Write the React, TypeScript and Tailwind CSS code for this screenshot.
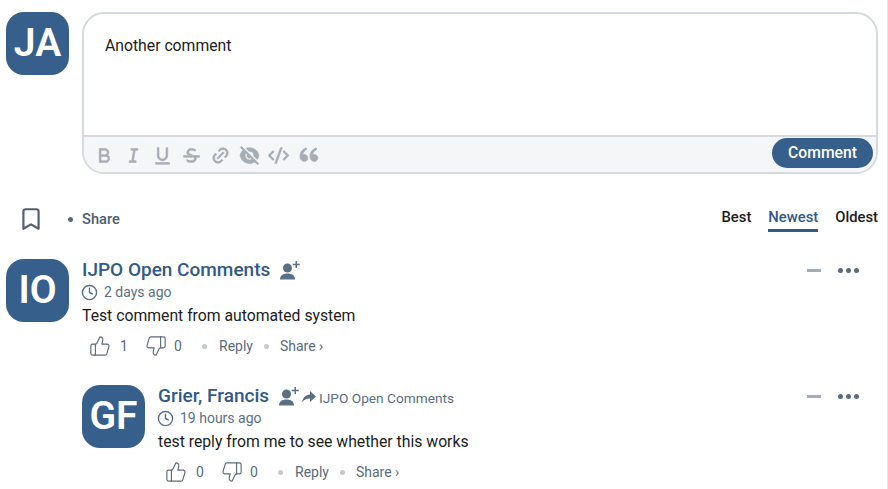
import { RiBold, RiItalic, RiUnderline, RiStrikethrough, RiLinkM, RiEyeOffFill, RiCodeSSlashLine, RiDoubleQuotesL } from "react-icons/ri";
import { Bookmark, Clock, ThumbsDown, ThumbsUp } from "lucide-react";

function Avatar({ initials }: { initials: string }) {
  return (
    <div className="flex h-[63px] w-[63px] shrink-0 items-center justify-center rounded-[18px] bg-[#365f8c] text-[39px] font-semibold text-white">
      {initials}
    </div>
  );
}

function FollowIcon() {
  return (
    <svg width="20" height="19" viewBox="0 0 20 19" fill="#5b7083">
      <circle cx="7.5" cy="7" r="4.5" />
      <path d="M0 18.500c0-4 3-6 7.500-6s7.500 2 7.500 6z" />
      <path d="M15.500 0h1.500v2.800h2.800v1.500H17v2.800h-1.500V4.300h-2.800V2.800h2.800z" />
    </svg>
  );
}

function Dot({ className }: { className: string }) {
  return <span className={`h-[5px] w-[5px] rounded-full ${className}`} />;
}

function Comment({
  initials,
  name,
  time,
  body,
  likes,
  replyTo,
}: {
  initials: string;
  name: string;
  time: string;
  body: string;
  likes: number;
  replyTo?: string;
}) {
  return (
    <div className="flex gap-[13px]">
      <Avatar initials={initials} />
      <div className="min-w-0 flex-1">
        <div className="flex h-[23px] items-center">
          <span className="text-[19px] font-medium text-[#315a88]">{name}</span>
          <span className="ml-[10px] -mt-[1px]">
            <FollowIcon />
          </span>
          {replyTo && (
            <span className="ml-[3px] mt-[3px] flex items-center gap-[3px] text-[13.7px] text-[#5b7083]">
              <svg width="14" height="12" viewBox="0 0 14 12" fill="#5b7083" className="-mt-[3px]">
                <path d="M8 0l6 5.500L8 11V7.500C4.500 7.500 2 8.500 0 11.500 .7 7 3.500 4 8 3.500z" />
              </svg>
              {replyTo}
            </span>
          )}
          <div className="ml-auto mr-[28px] flex items-center gap-[17px]">
            <span className="h-[3px] w-[14px] bg-[#a3adb8]" />
            <div className="flex gap-[3px]">
              <Dot className="bg-[#5b6b7d]" />
              <Dot className="bg-[#5b6b7d]" />
              <Dot className="bg-[#5b6b7d]" />
            </div>
          </div>
        </div>
        <div className="flex items-center gap-[6px] text-[14px] leading-[20px] text-[#5b7083]">
          <Clock size={17} strokeWidth={2} className="-ml-[1px]" />
          <span>{time}</span>
        </div>
        <p className="mt-[3px] text-[15.75px] leading-[22px] text-[#1c1c1c]">{body}</p>
        <div className="mt-[7px] ml-[7px] flex h-[24px] items-center text-[14px] text-[#5b6b7d]">
          <ThumbsUp size={22} strokeWidth={1.25} className="text-[#5f6b78]" />
          <span className="ml-[9px] w-[8px]">{likes}</span>
          <ThumbsDown size={22} strokeWidth={1.25} className="ml-[17px] text-[#5f6b78]" />
          <span className="ml-[7px] w-[8px]">0</span>
          <Dot className="ml-[20px] bg-[#c4cad1]" />
          <span className="ml-[12px]">Reply</span>
          <Dot className="ml-[11px] bg-[#c4cad1]" />
          <span className="ml-[11px]">Share ›</span>
        </div>
      </div>
    </div>
  );
}

export default function App() {
  return (
    <div className="h-[489px] w-[888px] overflow-hidden border-r border-[#e5e7eb] bg-white pl-[6px] pt-[12px] font-['Roboto',sans-serif]">
      <div className="flex gap-[13px] pr-[9px]">
        <Avatar initials="JA" />
        <div className="h-[162px] flex-1 overflow-hidden rounded-[22px] border-2 border-[#d5dae1]">
          <div className="h-[121px] px-[21px] pt-[21px] text-[15.75px] leading-[22px] text-[#1c1c1c]">Another comment</div>
          <div className="flex h-[37px] items-center border-t-2 border-[#d5dae1] bg-[#f5f6f8] pb-[3px] pl-[10px] pr-[3px] text-[#a6adb5]">
            <div className="mt-[4px] flex items-center gap-[8px] text-[21px] [&_svg]:stroke-[0.7]">
              <RiBold />
              <RiItalic />
              <RiUnderline />
              <RiStrikethrough />
              <RiLinkM />
              <RiEyeOffFill />
              <RiCodeSSlashLine />
              <RiDoubleQuotesL className="text-[24px]" />
            </div>
            <button className="ml-auto h-[30px] w-[101px] rounded-full bg-[#365f8c] text-[15.7px] font-medium text-white">
              Comment
            </button>
          </div>
        </div>
      </div>
      <div className="mt-[26px] flex h-[38px] items-center pr-[9px]">
        <Bookmark size={26} strokeWidth={2} className="ml-[12px] text-[#525f6f]" />
        <Dot className="ml-[24px] bg-[#5b6b7d]" />
        <span className="ml-[9px] text-[14.7px] font-medium text-[#4f5d6e]">Share</span>
        <div className="ml-auto flex items-center gap-[17px] text-[14.8px] font-medium text-[#1c1c1c]">
          <span className="pb-[3px]">Best</span>
          <span className="border-b-[3px] border-[#315a88] text-[#315a88]">Newest</span>
          <span className="pb-[3px]">Oldest</span>
        </div>
      </div>
      <div className="mt-[21px]">
        <Comment
          initials="IO"
          name="IJPO Open Comments"
          time="2 days ago"
          body="Test comment from automated system"
          likes={1}
        />
      </div>
      <div className="mt-[27px] pl-[76px]">
        <Comment
          initials="GF"
          name="Grier, Francis"
          time="19 hours ago"
          body="test reply from me to see whether this works"
          likes={0}
          replyTo="IJPO Open Comments"
        />
      </div>
    </div>
  );
}
